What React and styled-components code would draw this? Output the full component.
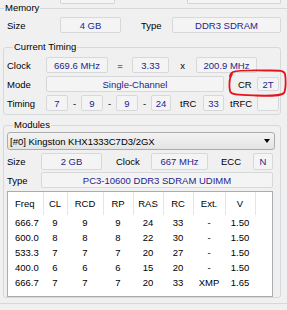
import styled, { createGlobalStyle } from "styled-components";

const GlobalStyle = createGlobalStyle`
  html, body { margin: 0; padding: 0; background: #f0f0f0; }
  body { font-family: "Liberation Sans", Arial, sans-serif; font-size: 9.5px; }
`;

const Page = styled.div`
  position: relative;
  width: 287px;
  height: 310px;
  overflow: hidden;
  background: #f0f0f0;
  color: #000;
`;

const StubRow = styled.div`
  display: flex;
  height: 4px;
`;

const Stub = styled.div`
  box-sizing: border-box;
  flex: none;
  margin-left: ${(p) => p.$left}px;
  width: ${(p) => p.$w}px;
  height: 4px;
  border: 1px solid #d4d4d4;
  border-top: none;
  border-radius: 0 0 2px 2px;
  background: #f4f4f4;
`;

const Group = styled.fieldset`
  box-sizing: border-box;
  min-width: 0;
  margin: ${(p) => p.$margin || "0"};
  width: ${(p) => p.$w}px;
  padding: ${(p) => p.$pad || "0"};
  border: 1px solid #d5d9dc;
  border-radius: 3px;
  display: flex;
  flex-direction: column;
  gap: ${(p) => p.$gap || 0}px;
`;

const Legend = styled.legend`
  margin-left: ${(p) => p.$left}px;
  padding: 0 1px;
  line-height: ${(p) => p.$lh || 12}px;
  font-size: 9.5px;
`;

const Row = styled.div`
  display: flex;
  align-items: center;
  height: ${(p) => p.$h || 16}px;
  margin-left: ${(p) => p.$left || 0}px;
  margin-top: ${(p) => p.$top || 0}px;
`;

const Label = styled.span`
  flex: none;
  box-sizing: border-box;
  width: ${(p) => p.$w}px;
  padding-left: ${(p) => p.$pad || 0}px;
  text-align: ${(p) => (p.$center ? "center" : "left")};
  white-space: nowrap;
`;

const Field = styled.div`
  box-sizing: border-box;
  flex: none;
  width: ${(p) => p.$w}px;
  height: ${(p) => p.$h || 16}px;
  display: flex;
  align-items: center;
  justify-content: center;
  border: 1px solid #d6d8da;
  border-radius: 2px;
  background: #f4f4f4;
  color: #1e1e8e;
  white-space: nowrap;
`;

const Select = styled.div`
  box-sizing: border-box;
  width: 268px;
  height: 18px;
  display: flex;
  align-items: center;
  justify-content: space-between;
  padding: 0 4px 0 2px;
  border: 1px solid #acacac;
  border-radius: 3px;
  background: linear-gradient(#f3f3f3, #e4e4e4);
`;

const Arrow = styled.span`
  width: 0;
  height: 0;
  border-left: 3.5px solid transparent;
  border-right: 3.5px solid transparent;
  border-top: 4px solid #000;
`;

const ListBox = styled.div`
  box-sizing: border-box;
  width: 266px;
  height: 106px;
  border: 1px solid #a9adb0;
  background: #fff;
`;

const Table = styled.table`
  width: 264px;
  table-layout: fixed;
  border-collapse: collapse;
  font-size: 9.5px;
`;

const Col = styled.col`
  width: ${(p) => p.$w}px;
`;

const Th = styled.th`
  height: 23px;
  padding: 0 0 0 ${(p) => (p.$left ? 7 : 0)}px;
  font-weight: normal;
  text-align: ${(p) => (p.$left ? "left" : "center")};
  border-right: ${(p) => (p.$last ? "none" : "1px solid #e3e5e7")};
`;

const Td = styled.td`
  height: 15px;
  padding: 0 0 0 ${(p) => (p.$left ? 7 : 0)}px;
  text-align: ${(p) => (p.$left ? "left" : "center")};
`;

const Mark = styled.svg`
  position: absolute;
  left: 226px;
  top: 67px;
`;

const cols = [
  { name: "Freq", w: 35, left: true },
  { name: "CL", w: 24 },
  { name: "RCD", w: 36 },
  { name: "RP", w: 30 },
  { name: "RAS", w: 30 },
  { name: "RC", w: 30 },
  { name: "Ext.", w: 32 },
  { name: "V", w: 30 },
  { name: "", w: 17, last: true },
];

const rows = [
  ["666.7", "9", "9", "9", "24", "33", "-", "1.50"],
  ["600.0", "8", "8", "8", "22", "30", "-", "1.50"],
  ["533.3", "7", "7", "7", "20", "27", "-", "1.50"],
  ["400.0", "6", "6", "6", "15", "20", "-", "1.50"],
  ["666.7", "7", "7", "7", "20", "33", "XMP", "1.65"],
];

export default function App() {
  return (
    <Page>
      <GlobalStyle />
      <StubRow>
        <Stub $left={60} $w={55} />
        <Stub $left={72} $w={94} />
      </StubRow>

      <Group $margin="0 0 0 -4px" $w={300} $pad="0 0 5px 6px">
        <Legend $left={1} $lh={8}>Memory</Legend>
        <Row $left={4} $top={5}>
          <Label $w={53}>Size</Label>
          <Field $w={61}>4 GB</Field>
          <Label $w={51} $pad={20}>Type</Label>
          <Field $w={109}>DDR3 SDRAM</Field>
        </Row>

        <Group $margin="8px 0 0 0" $w={278} $pad="4px 0 3px 3px" $gap={3}>
          <Legend $left={6}>Current Timing</Legend>
          <Row>
            <Label $w={39}>Clock</Label>
            <Field $w={62}>669.6 MHz</Field>
            <Label $w={24} $center>=</Label>
            <Field $w={37}>3.33</Field>
            <Label $w={27} $center>x</Label>
            <Field $w={61}>200.9 MHz</Field>
          </Row>
          <Row>
            <Label $w={39}>Mode</Label>
            <Field $w={178}>Single-Channel</Field>
            <Label $w={33} $pad={14}>CR</Label>
            <Field $w={22} $h={14}>2T</Field>
          </Row>
          <Row>
            <Label $w={39}>Timing</Label>
            <Field $w={22}>7</Field>
            <Label $w={13} $center>-</Label>
            <Field $w={22}>9</Field>
            <Label $w={13} $center>-</Label>
            <Field $w={22}>9</Field>
            <Label $w={13} $center>-</Label>
            <Field $w={20}>24</Field>
            <Label $w={32} $pad={9}>tRC</Label>
            <Field $w={21}>33</Field>
            <Label $w={33} $pad={6}>tRFC</Label>
            <Field $w={22} />
          </Row>
        </Group>

        <Group $margin="4px 0 0 0" $w={278} $pad="1px 0 0 3px">
          <Legend $left={6}>Modules</Legend>
          <Select>
            <span>[#0] Kingston KHX1333C7D3/2GX</span>
            <Arrow />
          </Select>
          <Row $h={17} $top={3}>
            <Label $w={34}>Size</Label>
            <Field $w={61} $h={17}>2 GB</Field>
            <Label $w={49} $pad={14}>Clock</Label>
            <Field $w={57} $h={17}>667 MHz</Field>
            <Label $w={45} $pad={13}>ECC</Label>
            <Field $w={20} $h={17}>N</Field>
          </Row>
          <Row $top={2}>
            <Label $w={34}>Type</Label>
            <Field $w={232}>PC3-10600 DDR3 SDRAM UDIMM</Field>
          </Row>
          <Row $h={106} $top={3}>
            <ListBox>
              <Table>
                <colgroup>
                  {cols.map((c, i) => (
                    <Col key={i} $w={c.w} />
                  ))}
                </colgroup>
                <thead>
                  <tr>
                    {cols.map((c, i) => (
                      <Th key={i} $left={c.left} $last={c.last}>
                        {c.name}
                      </Th>
                    ))}
                  </tr>
                </thead>
                <tbody>
                  {rows.map((r, i) => (
                    <tr key={i}>
                      {r.map((v, j) => (
                        <Td key={j} $left={j === 0}>
                          {v}
                        </Td>
                      ))}
                      <Td />
                    </tr>
                  ))}
                </tbody>
              </Table>
            </ListBox>
          </Row>
        </Group>
      </Group>

      <Mark width="62" height="32" viewBox="0 0 62 32">
        <path
          d="M6 7 C3 11 3 20 4 24 C5 28 12 28 30 28.5 C46 29 55 29 58 26 C60 22 60 12 59 7 C58 3 52 3.5 40 3.5 C25 3.5 12 3 7 5 C5 6 4 8 4 10"
          fill="none"
          stroke="#e3141c"
          strokeWidth="1.8"
          strokeLinecap="round"
        />
      </Mark>
    </Page>
  );
}
